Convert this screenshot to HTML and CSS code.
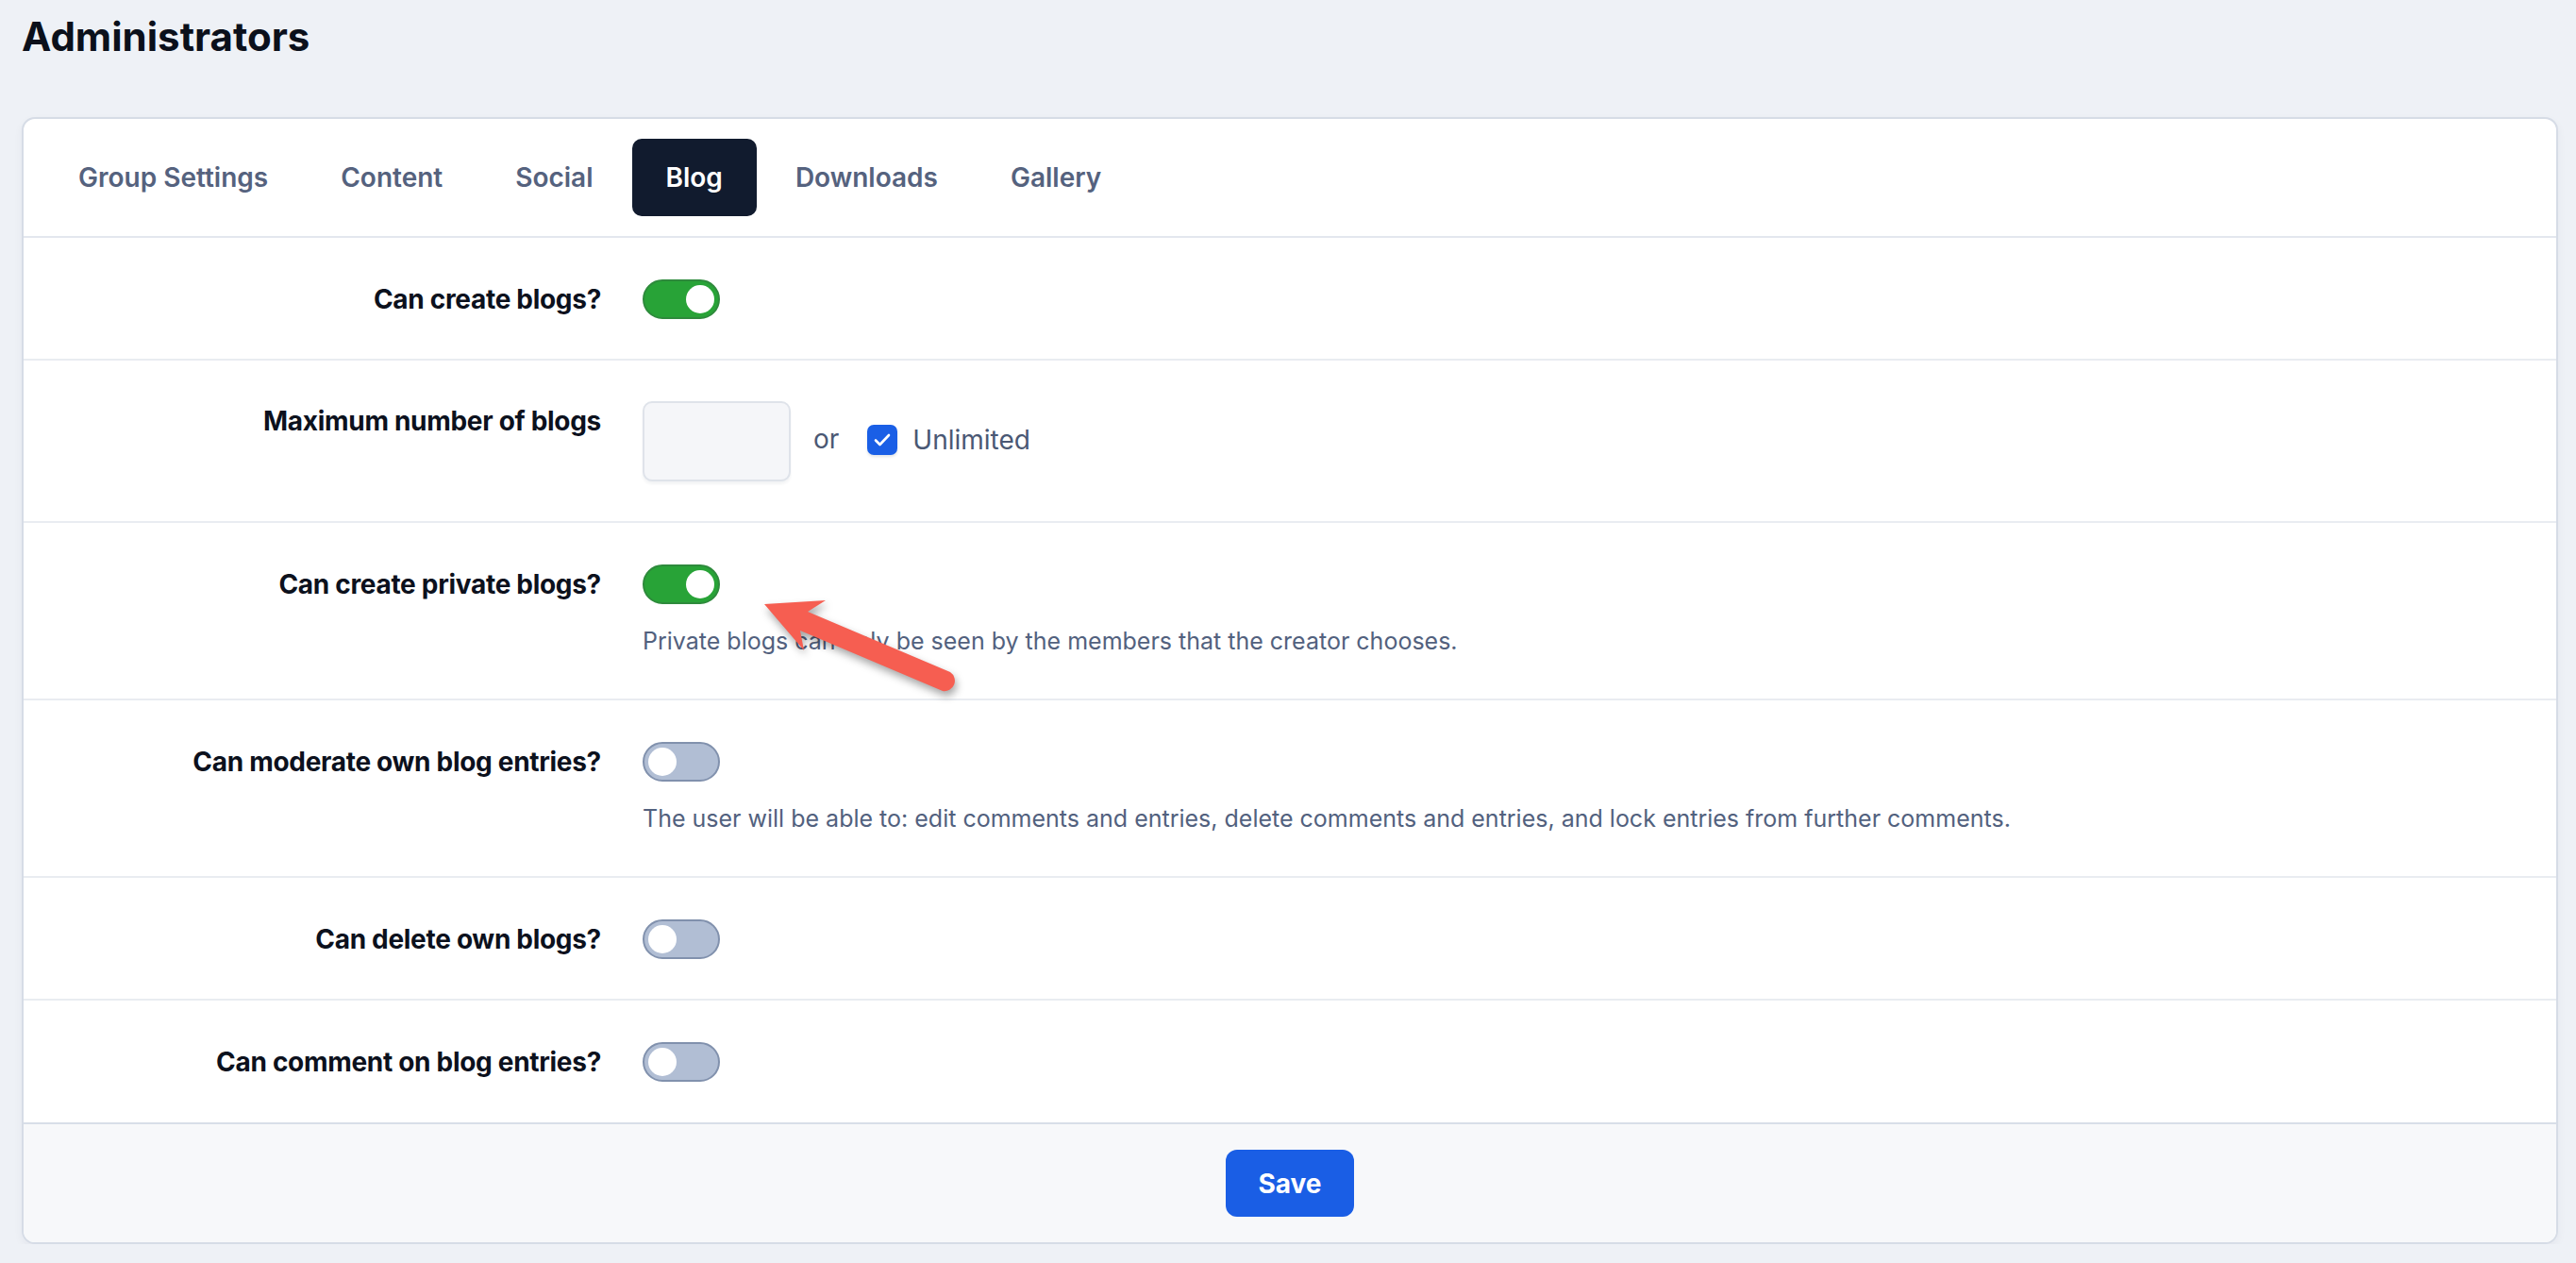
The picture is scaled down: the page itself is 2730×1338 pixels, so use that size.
FILE: index.html
```html
<!DOCTYPE html>
<html lang="en">
<head>
<meta charset="utf-8">
<title>Administrators</title>
<link rel="stylesheet" href="styles.css">
</head>
<body>
<div class="page">
  <h1 class="title">Administrators</h1>
  <div class="card">
    <nav class="tabs">
      <a class="tab">Group Settings</a>
      <a class="tab">Content</a>
      <a class="tab">Social</a>
      <a class="tab active">Blog</a>
      <a class="tab">Downloads</a>
      <a class="tab">Gallery</a>
    </nav>

    <div class="row">
      <div class="label">Can create blogs?</div>
      <div class="control"><span class="toggle on"><span class="knob"></span></span></div>
    </div>

    <div class="row row-input">
      <div class="label">Maximum number of blogs</div>
      <div class="control inline">
        <span class="num-input"></span>
        <span class="or">or</span>
        <span class="checkbox"><svg viewBox="0 0 32 32" width="32" height="32"><path d="M9 16.5l4.5 4.5L23 11" fill="none" stroke="#fff" stroke-width="2.6" stroke-linecap="round" stroke-linejoin="round"/></svg></span>
        <span class="check-label">Unlimited</span>
      </div>
    </div>

    <div class="row">
      <div class="label">Can create private blogs?</div>
      <div class="control">
        <span class="toggle on"><span class="knob"></span></span>
        <p class="desc">Private blogs can only be seen by the members that the creator chooses.</p>
      </div>
    </div>

    <div class="row">
      <div class="label">Can moderate own blog entries?</div>
      <div class="control">
        <span class="toggle"><span class="knob"></span></span>
        <p class="desc">The user will be able to: edit comments and entries, delete comments and entries, and lock entries from further comments.</p>
      </div>
    </div>

    <div class="row">
      <div class="label">Can delete own blogs?</div>
      <div class="control"><span class="toggle"><span class="knob"></span></span></div>
    </div>

    <div class="row last">
      <div class="label">Can comment on blog entries?</div>
      <div class="control"><span class="toggle"><span class="knob"></span></span></div>
    </div>

    <div class="footer">
      <button class="save">Save</button>
    </div>
  </div>
</div>

<svg class="arrow" viewBox="780 600 260 150" width="260" height="150">
  <path d="M810 640 L875 636 L856 648 L1007 712 A11 11 0 0 1 999 732 L848 668 L852 689 Z" fill="#f65e51"/>
</svg>
</body>
</html>
```

FILE: styles.css
```css
* { box-sizing: border-box; }

html, body {
  margin: 0;
  padding: 0;
  background: #eef1f6;
  font-family: Inter, "Noto Sans", "Liberation Sans", sans-serif;
  color: #0c111d;
}

.page {
  padding: 14px 19px 0 23px;
}

.title {
  margin: 0;
  font-size: 42px;
  line-height: 50px;
  font-weight: 700;
  color: #0b101b;
  letter-spacing: 0;
}

.card {
  margin-top: 60px;
  background: #fff;
  border: 2px solid #d6dce6;
  border-radius: 14px;
  box-shadow: 0 4px 10px rgba(30, 45, 80, 0.05);
  overflow: hidden;
}

.tabs {
  display: flex;
  gap: 5px;
  padding: 21px 22px;
  border-bottom: 2px solid #e3e7ee;
}

.tab {
  display: block;
  height: 82px;
  line-height: 82px;
  padding: 0 36px;
  font-size: 28px;
  font-weight: 600;
  color: #55627e;
  border-radius: 10px;
}

.tab.active {
  background: #111b2e;
  color: #fff;
}

.row {
  display: grid;
  grid-template-columns: 656px 1fr;
  padding: 44px 0 42px;
  border-bottom: 2px solid #e9ecf1;
}

.row.row-input {
  padding: 43px 0 42px;
}

.row.last {
  border-bottom: none;
  padding-bottom: 43px;
}

.label {
  text-align: right;
  padding-right: 44px;
  font-size: 28px;
  line-height: 42px;
  font-weight: 700;
  color: #0c111d;
  letter-spacing: -0.3px;
}

.control {
  display: flex;
  flex-direction: column;
  align-items: flex-start;
}

.control.inline {
  flex-direction: row;
  align-items: center;
}

.toggle {
  position: relative;
  display: block;
  width: 82px;
  height: 42px;
  border-radius: 21px;
  background: #b1bed4;
  border: 2px solid #8191ad;
}

.toggle .knob {
  position: absolute;
  top: 4px;
  left: 4px;
  width: 30px;
  height: 30px;
  border-radius: 50%;
  background: #fff;
}

.toggle.on {
  background: #28a337;
  border-color: #2e8a3c;
}

.toggle.on .knob {
  left: auto;
  right: 4px;
}

.desc {
  margin: 20px 0 0;
  font-size: 25px;
  line-height: 38px;
  color: #52617e;
}

.num-input {
  display: block;
  width: 157px;
  height: 85px;
  background: #f5f6f9;
  border: 2px solid #dfe3ea;
  border-radius: 10px;
  box-shadow: 0 3px 3px rgba(20, 30, 60, 0.05);
}

.or {
  margin-left: 24px;
  font-size: 28px;
  line-height: 36px;
  margin-top: -6px;
  color: #4b5874;
}

.checkbox {
  display: block;
  width: 32px;
  height: 32px;
  margin-left: 30px;
  margin-top: -4px;
  border-radius: 7px;
  background: #1a5fe6;
  box-shadow: 0 2px 3px rgba(20, 30, 60, 0.12);
}

.checkbox svg { display: block; }

.check-label {
  margin-left: 16px;
  font-size: 28px;
  line-height: 36px;
  margin-top: -4px;
  color: #4a5874;
}

.footer {
  display: flex;
  justify-content: center;
  padding: 27px 0;
  background: #f7f8fa;
  border-top: 2px solid #d8dee8;
}

.save {
  width: 136px;
  height: 71px;
  border: none;
  border-radius: 12px;
  background: #1a5ee5;
  color: #fff;
  font-family: Inter, "Noto Sans", "Liberation Sans", sans-serif;
  font-size: 28px;
  font-weight: 700;
}

.arrow {
  position: absolute;
  left: 780px;
  top: 600px;
  overflow: visible;
  filter: drop-shadow(2px 5px 4px rgba(0, 0, 0, 0.35));
}
```
